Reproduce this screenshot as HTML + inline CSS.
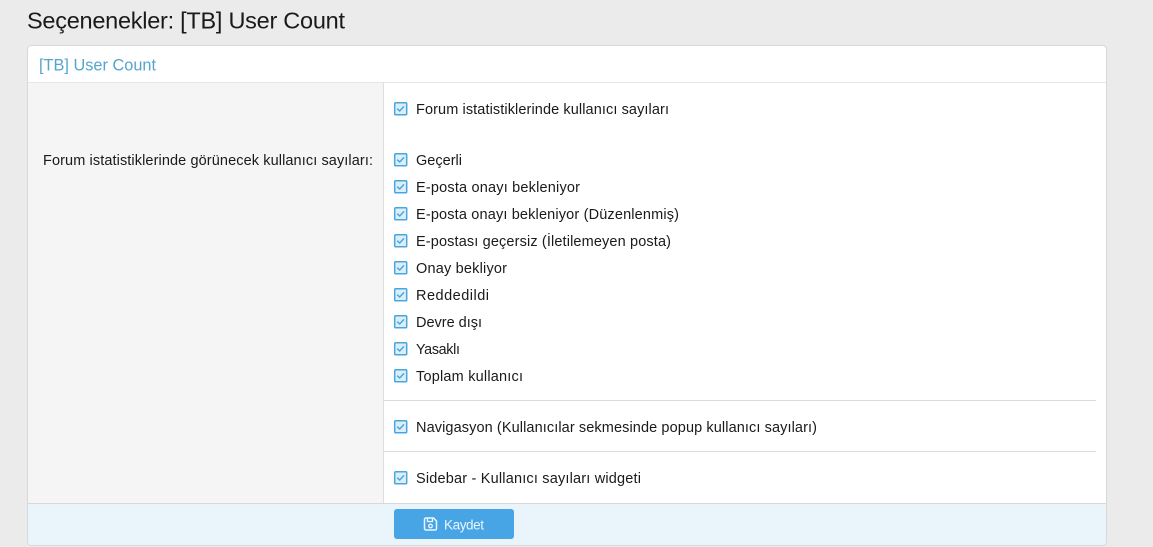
<!DOCTYPE html>
<html><head><meta charset="utf-8"><style>
html,body{margin:0;padding:0;background:#ebebeb}
svg{display:block}
text{font-family:"Liberation Sans",sans-serif;fill:#1a1a1a}
.i{font-size:14.500px}
</style></head><body>
<svg width="1153" height="547" viewBox="0 0 1153 547" xmlns="http://www.w3.org/2000/svg">
<defs>
<g id="c"><rect x="-5.500" y="-5.500" width="12" height="12" rx="1" fill="#ddeef9" stroke="#47a7e0" stroke-width="1.500"/><path d="M-3 0.500 L-0.500 2.800 L3.800 -1.800" fill="none" stroke="#47a7e0" stroke-width="1.500"/></g>
</defs>
<rect width="1153" height="547" fill="#ebebeb"/>
<text x="27" y="28.500" font-size="23.500" textLength="318">Seçenenekler: [TB] User Count</text>
<rect x="27.500" y="45.500" width="1079" height="500" rx="4" fill="#fff" stroke="#d8d8d8"/>
<text x="39" y="70.500" font-size="16.300" textLength="117" style="fill:#55a5cf">[TB] User Count</text>
<rect x="28" y="82" width="1078" height="1" fill="#e6e6e6"/>
<rect x="28" y="83" width="355" height="420" fill="#f5f5f5"/>
<rect x="383" y="83" width="1" height="420" fill="#dedede"/>
<text class="i" x="43" y="165" textLength="330">Forum istatistiklerinde görünecek kullanıcı sayıları:</text>
<use href="#c" x="400.200" y="108.200"/><text class="i" x="416" y="114" textLength="253">Forum istatistiklerinde kullanıcı sayıları</text>
<use href="#c" x="400.200" y="159.200"/><text class="i" x="416" y="165" textLength="46">Geçerli</text>
<use href="#c" x="400.200" y="186.200"/><text class="i" x="416" y="192" textLength="164">E-posta onayı bekleniyor</text>
<use href="#c" x="400.200" y="213.200"/><text class="i" x="416" y="219" textLength="263">E-posta onayı bekleniyor (Düzenlenmiş)</text>
<use href="#c" x="400.200" y="240.200"/><text class="i" x="416" y="246" textLength="255">E-postası geçersiz (İletilemeyen posta)</text>
<use href="#c" x="400.200" y="267.200"/><text class="i" x="416" y="273" textLength="91">Onay bekliyor</text>
<use href="#c" x="400.200" y="294.200"/><text class="i" x="416" y="300" textLength="73">Reddedildi</text>
<use href="#c" x="400.200" y="321.200"/><text class="i" x="416" y="327" textLength="66">Devre dışı</text>
<use href="#c" x="400.200" y="348.200"/><text x="416" y="354" font-size="14.300" textLength="44">Yasaklı</text>
<use href="#c" x="400.200" y="375.200"/><text class="i" x="416" y="381" textLength="107">Toplam kullanıcı</text>
<rect x="384" y="400" width="712" height="1" fill="#dcdcdc"/>
<use href="#c" x="400.200" y="426.200"/><text class="i" x="416" y="432" textLength="401">Navigasyon (Kullanıcılar sekmesinde popup kullanıcı sayıları)</text>
<rect x="384" y="451" width="712" height="1" fill="#dcdcdc"/>
<use href="#c" x="400.200" y="477.200"/><text class="i" x="416" y="483" textLength="225">Sidebar - Kullanıcı sayıları widgeti</text>
<path d="M28 503H1106V541a4 4 0 0 1-4 4H32a4 4 0 0 1-4-4Z" fill="#eaf5fb"/>
<rect x="28" y="503" width="1078" height="1" fill="#d8d8d8"/>
<rect x="394" y="509" width="120" height="30" rx="3" fill="#47a5e6"/>
<path d="M424.500 519.500a1.500 1.500 0 0 1 1.500-1.500h7.500l3 3v7.500a1.500 1.500 0 0 1-1.500 1.500h-9a1.500 1.500 0 0 1-1.500-1.500Z" fill="none" stroke="#eaf6fd" stroke-width="1.500"/>
<path d="M427.500 518.500v3h5v-3" fill="none" stroke="#eaf6fd" stroke-width="1.300"/>
<circle cx="430.500" cy="526" r="1.800" fill="none" stroke="#eaf6fd" stroke-width="1.300"/>
<text x="444" y="529.500" font-size="13.500" textLength="40" style="fill:#eaf6fd">Kaydet</text>
</svg>
</body></html>
